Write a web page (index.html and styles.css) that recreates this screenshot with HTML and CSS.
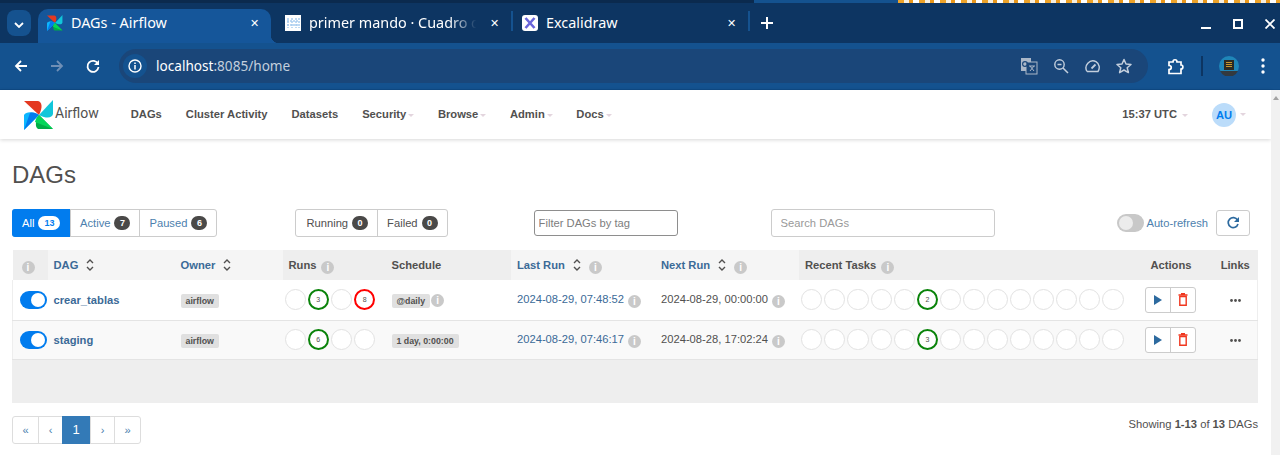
FILE: index.html
```html
<!DOCTYPE html>
<html lang="en">
<head>
    <meta charset="UTF-8">
    <meta name="viewport" content="width=device-width, initial-scale=1.0">
    <title>DAGs - Airflow</title>
    <link rel="stylesheet" href="styles.css">
</head>
<body>
    <svg class="sprite" width="0" height="0" aria-hidden="true">
        <symbol id="pinwheel" viewBox="0 0 30 30">
            <path fill="#e43921" d="M0 1 L14 1 C18 2 19 7 15 15 Z"/>
            <path fill="#11c6da" d="M29 0 L29 14 C28 18 23 19 15 15 Z"/>
            <path fill="#00ad46" d="M29 29 L14 29 C11 27 11 22 15 15 Z"/>
            <path fill="#0cb6ff" d="M0 30 L0 15 C2 12 8 11 15 15 Z"/>
            <path fill="#017cee" d="M0 30 L6 13 C9 12 12 13 15 15 Z"/>
            <path fill="#04d659" d="M29 29 L11 22 C12 18 13 17 15 15 Z"/>
        </symbol>
        <symbol id="sort" viewBox="0 0 8 12">
            <path fill="none" stroke="currentColor" stroke-width="1.4" d="M1 4 L4 1 L7 4 M1 8 L4 11 L7 8"/>
        </symbol>
        <symbol id="play" viewBox="0 0 8 10">
            <path fill="#2d6a9f" d="M0 0 L8 5 L0 10 Z"/>
        </symbol>
        <symbol id="trash" viewBox="0 0 10 13">
            <path fill="none" stroke="#f0371f" stroke-width="1.400" d="M1.800 3.500 H8.200 V12.300 H1.800 Z"/>
            <path stroke="#f0371f" stroke-width="1.300" d="M0.500 2 H9.500 M3 0.600 H7"/>
        </symbol>
        <symbol id="more" viewBox="0 0 11 3">
            <circle cx="1.500" cy="1.500" r="1.400" fill="#51504f"/>
            <circle cx="5.500" cy="1.500" r="1.400" fill="#51504f"/>
            <circle cx="9.500" cy="1.500" r="1.400" fill="#51504f"/>
        </symbol>
    </svg>

    <div class="top-strip">
        <div class="strip-dark"></div>
        <div class="strip-blue"></div>
        <div class="strip-wall"></div>
    </div>

    <div class="tabbar">
        <button class="tab-search">
            <svg width="10" height="6" viewBox="0 0 10 6"><path fill="none" stroke="#fff" stroke-width="1.8" d="M1 1 L5 5 L9 1"/></svg>
        </button>
        <div class="tab tab-active">
            <svg class="favicon" viewBox="0 0 30 30"><use href="#pinwheel"/></svg>
            <span class="tab-title">DAGs - Airflow</span>
            <span class="tab-close">✕</span>
        </div>
        <div class="tab">
            <svg class="favicon" viewBox="0 0 16 16">
                <rect width="16" height="16" fill="#fff"/>
                <path fill="none" stroke="#a9cdf0" stroke-width="1.5" stroke-dasharray="2 1" d="M3 3 V13 M7 3 V13 M11 3 V13 M14 3 V13 M2 6 H14 M2 10 H14"/>
            </svg>
            <span class="tab-title tab-fade">primer mando · Cuadro d</span>
            <span class="tab-close">✕</span>
        </div>
        <div class="tab-sep"></div>
        <div class="tab">
            <svg class="favicon" viewBox="0 0 16 16">
                <rect width="16" height="16" rx="3" fill="#fff"/>
                <path fill="none" stroke="#6965db" stroke-width="2.6" d="M3.5 3 L12.5 13 M12.5 3 L3.5 13"/>
            </svg>
            <span class="tab-title">Excalidraw</span>
            <span class="tab-close">✕</span>
        </div>
        <div class="tab-sep"></div>
        <svg class="new-tab" width="12" height="12" viewBox="0 0 12 12"><path stroke="#fff" stroke-width="2" d="M6 0 V12 M0 6 H12"/></svg>
        <div class="win-controls">
            <svg width="10" height="10" viewBox="0 0 10 10"><path stroke="#fff" stroke-width="2" d="M0 9 H10"/></svg>
            <svg width="10" height="10" viewBox="0 0 10 10"><rect x="1" y="1" width="8" height="8" fill="none" stroke="#fff" stroke-width="2"/></svg>
            <svg width="10" height="10" viewBox="0 0 10 10"><path stroke="#fff" stroke-width="1.8" d="M0.5 0.5 L9.5 9.5 M9.5 0.5 L0.5 9.5"/></svg>
        </div>
    </div>

    <div class="toolbar">
        <svg class="tool" viewBox="0 0 16 16"><path fill="none" stroke="#fff" stroke-width="1.8" d="M14 8 H3 M8 3 L3 8 L8 13"/></svg>
        <svg class="tool" viewBox="0 0 16 16"><path fill="none" stroke="#6f8fb6" stroke-width="1.8" d="M2 8 H13 M8 3 L13 8 L8 13"/></svg>
        <svg class="tool" viewBox="0 0 16 16"><path fill="none" stroke="#fff" stroke-width="1.8" d="M13 6 A5.5 5.5 0 1 0 13.5 9"/><path fill="#fff" d="M14 2 V7 H9 Z"/></svg>
        <div class="omnibox">
            <span class="site-info">
                <svg width="14" height="14" viewBox="0 0 14 14"><circle cx="7" cy="7" r="6" fill="none" stroke="#fff" stroke-width="1.4"/><path stroke="#fff" stroke-width="1.5" d="M7 6 V10.5 M7 3.4 V5"/></svg>
            </span>
            <span class="url"><b>localhost</b>:8085/home</span>
            <span class="omni-icons">
                <svg width="18" height="18" viewBox="0 0 18 18">
                    <rect x="1" y="1" width="10" height="13" fill="#aab7c8"/>
                    <rect x="6" y="5" width="11" height="12" fill="#1a4679" stroke="#aab7c8"/>
                    <circle cx="5" cy="7" r="2.4" fill="none" stroke="#1a4679" stroke-width="1.2"/>
                    <path fill="none" stroke="#aab7c8" d="M9 9 H15 M10 9 L14 14 M14 9 L10 14"/>
                </svg>
                <svg width="16" height="16" viewBox="0 0 16 16"><circle cx="6.5" cy="6.5" r="4.7" fill="none" stroke="#c3cfdd" stroke-width="1.4"/><path stroke="#c3cfdd" stroke-width="1.5" d="M10 10 L15 15 M4.5 6.5 H8.5"/></svg>
                <svg width="17" height="16" viewBox="0 0 17 16"><path fill="none" stroke="#c3cfdd" stroke-width="1.4" d="M3 13.5 H14 A7 7 0 0 0 12 3.6 A7 7 0 0 0 3 13.5"/><path stroke="#c3cfdd" stroke-width="1.8" d="M7.5 10.5 L11.5 6.5"/></svg>
                <svg width="16" height="16" viewBox="0 0 16 16"><path fill="none" stroke="#c3cfdd" stroke-width="1.5" stroke-linejoin="round" d="M8 1.5 L10 6 L15 6.5 L11.2 9.7 L12.4 14.6 L8 12 L3.6 14.6 L4.8 9.7 L1 6.5 L6 6 Z"/></svg>
            </span>
        </div>
        <svg class="ext-icon" width="17" height="17" viewBox="0 0 17 17"><path fill="none" stroke="#fff" stroke-width="1.7" d="M2 4 H6 C6 1 10 1 10 4 H14 V7 C16.500 7 16.500 11 14 11 V15.500 H2 V11.500 C5 11.500 5 7.500 2 7.500 Z"/></svg>
        <div class="tool-sep"></div>
        <svg class="avatar-pic" width="20" height="20" viewBox="0 0 20 20">
            <circle cx="10" cy="10" r="10" fill="#1f86b8"/>
            <path fill="#33393f" d="M1 15 H19 A10 10 0 0 1 1 15 Z"/>
            <rect x="5" y="4" width="10" height="10" fill="#2b2a22"/>
            <path stroke="#c8962c" d="M7 6.500 H13 M7 8.500 H13 M7 10.500 H13"/>
        </svg>
        <svg class="kebab" width="4" height="16" viewBox="0 0 4 16"><circle cx="2" cy="2" r="1.700" fill="#fff"/><circle cx="2" cy="8" r="1.700" fill="#fff"/><circle cx="2" cy="14" r="1.700" fill="#fff"/></svg>
    </div>

    <div class="viewport">
        <div class="page">
            <nav class="navbar">
                <a class="brand">
                    <svg width="30" height="30" viewBox="0 0 30 30"><use href="#pinwheel"/></svg>
                    <span>Airflow</span>
                </a>
                <a class="nav-link">DAGs</a>
                <a class="nav-link">Cluster Activity</a>
                <a class="nav-link">Datasets</a>
                <a class="nav-link caret">Security</a>
                <a class="nav-link caret">Browse</a>
                <a class="nav-link caret">Admin</a>
                <a class="nav-link caret">Docs</a>
                <a class="nav-link caret nav-time">15:37 UTC</a>
                <a class="nav-user caret"><span class="user-badge">AU</span></a>
            </nav>

            <main class="content">
                <h1>DAGs</h1>

                <div class="filters">
                    <div class="btn-group">
                        <a class="btn btn-on">All <span class="count count-on">13</span></a>
                        <a class="btn">Active <span class="count">7</span></a>
                        <a class="btn">Paused <span class="count">6</span></a>
                    </div>
                    <div class="btn-group group-state">
                        <a class="btn">Running <span class="count">0</span></a>
                        <a class="btn">Failed <span class="count">0</span></a>
                    </div>
                    <input class="tag-filter" type="text" placeholder="Filter DAGs by tag">
                    <input class="dag-search" type="text" placeholder="Search DAGs">
                    <div class="refresh">
                        <span class="switch switch-off"></span>
                        <span class="refresh-label">Auto-refresh</span>
                        <button class="refresh-btn">
                            <svg width="14" height="14" viewBox="0 0 14 14"><path fill="none" stroke="#2d6a9f" stroke-width="1.700" d="M11.500 4 A5 5 0 1 0 12 8"/><path fill="#2d6a9f" d="M13 1 V6 H8 Z"/></svg>
                        </button>
                    </div>
                </div>

                <table class="dag-table">
                    <thead>
                        <tr>
                            <th class="col-toggle th-dark"><span class="info info-first"></span></th>
                            <th class="col-dag"><a>DAG</a><svg class="sort"><use href="#sort"/></svg></th>
                            <th class="col-owner"><a>Owner</a><svg class="sort"><use href="#sort"/></svg></th>
                            <th class="col-runs th-dark">Runs<span class="info"></span></th>
                            <th class="col-schedule th-dark">Schedule</th>
                            <th class="col-last"><a>Last Run</a><svg class="sort"><use href="#sort"/></svg><span class="info"></span></th>
                            <th class="col-next"><a>Next Run</a><svg class="sort"><use href="#sort"/></svg><span class="info"></span></th>
                            <th class="col-tasks th-dark">Recent Tasks<span class="info"></span></th>
                            <th class="col-actions th-dark">Actions</th>
                            <th class="col-links th-dark">Links</th>
                        </tr>
                    </thead>
                    <tbody>
                        <tr>
                            <td class="cell-toggle"><span class="switch"></span></td>
                            <td><a class="dag-name">crear_tablas</a></td>
                            <td><span class="tag">airflow</span></td>
                            <td>
                                <div class="circles">
                                    <span class="dot"></span><span class="dot dot-ok">3</span><span class="dot"></span><span class="dot dot-fail">8</span>
                                </div>
                            </td>
                            <td><span class="tag">@daily</span><span class="info info-tag"></span></td>
                            <td><a class="date">2024-08-29, 07:48:52</a><span class="info"></span></td>
                            <td><span class="date date-next">2024-08-29, 00:00:00</span><span class="info"></span></td>
                            <td>
                                <div class="circles">
                                    <span class="dot"></span><span class="dot"></span><span class="dot"></span><span class="dot"></span><span class="dot"></span><span class="dot dot-ok">2</span><span class="dot"></span><span class="dot"></span><span class="dot"></span><span class="dot"></span><span class="dot"></span><span class="dot"></span><span class="dot"></span><span class="dot"></span>
                                </div>
                            </td>
                            <td class="cell-actions">
                                <div class="action-group">
                                    <button class="action"><svg width="8" height="10"><use href="#play"/></svg></button>
                                    <button class="action"><svg width="10" height="13"><use href="#trash"/></svg></button>
                                </div>
                            </td>
                            <td class="cell-links"><svg class="more" width="11" height="3"><use href="#more"/></svg></td>
                        </tr>
                        <tr>
                            <td class="cell-toggle"><span class="switch"></span></td>
                            <td><a class="dag-name">staging</a></td>
                            <td><span class="tag">airflow</span></td>
                            <td>
                                <div class="circles">
                                    <span class="dot"></span><span class="dot dot-ok">6</span><span class="dot"></span><span class="dot"></span>
                                </div>
                            </td>
                            <td><span class="tag">1 day, 0:00:00</span></td>
                            <td><a class="date">2024-08-29, 07:46:17</a><span class="info"></span></td>
                            <td><span class="date date-next">2024-08-28, 17:02:24</span><span class="info"></span></td>
                            <td>
                                <div class="circles">
                                    <span class="dot"></span><span class="dot"></span><span class="dot"></span><span class="dot"></span><span class="dot"></span><span class="dot dot-ok">3</span><span class="dot"></span><span class="dot"></span><span class="dot"></span><span class="dot"></span><span class="dot"></span><span class="dot"></span><span class="dot"></span><span class="dot"></span>
                                </div>
                            </td>
                            <td class="cell-actions">
                                <div class="action-group">
                                    <button class="action"><svg width="8" height="10"><use href="#play"/></svg></button>
                                    <button class="action"><svg width="10" height="13"><use href="#trash"/></svg></button>
                                </div>
                            </td>
                            <td class="cell-links"><svg class="more" width="11" height="3"><use href="#more"/></svg></td>
                        </tr>
                    </tbody>
                </table>
                <div class="table-foot"></div>

                <div class="pager-row">
                    <div class="pager">
                        <a>«</a><a>‹</a><a class="pager-on">1</a><a>›</a><a>»</a>
                    </div>
                    <p class="showing">Showing <b>1-13</b> of <b>13</b> DAGs</p>
                </div>
            </main>
        </div>
        <div class="scrollbar"><span class="scroll-up"></span></div>
    </div>
</body>
</html>
```

FILE: styles.css
```css
* {
    box-sizing: border-box;
}
html, body {
    height: 100%;
}
body {
    margin: 0;
    overflow: hidden;
    display: flex;
    flex-direction: column;
    background: #fff;
    color: #51504f;
    font-family: "Liberation Sans", Arial, sans-serif;
    font-size: 11.2px;
    line-height: 16px;
}
a {
    color: inherit;
    text-decoration: none;
}
button {
    padding: 0;
    font: inherit;
}
.sprite {
    display: block;
    height: 0;
}

/* browser chrome */
.top-strip {
    display: flex;
    height: 3px;
}
.strip-dark {
    width: 754px;
    background: #0b2a4e;
}
.strip-blue {
    width: 144px;
    background: #14528f;
}
.strip-wall {
    flex: 1;
    background: repeating-linear-gradient(90deg, #eda32a 0 6px, #f7efe0 6px 11px, #e9981c 11px 15px, #fff 15px 21px);
}
.tabbar {
    display: flex;
    align-items: flex-end;
    height: 40px;
    background: #0d3562;
    color: #fff;
    font-family: "Noto Sans", sans-serif;
    font-size: 14.4px;
}
.tab-search {
    align-self: flex-start;
    width: 24px;
    height: 26px;
    margin: 7px 7px 0 7px;
    background: #15528f;
    border: 0;
    border-radius: 8px;
}
.tab {
    display: flex;
    align-items: center;
    width: 235px;
    height: 34px;
    padding: 0 8px 6px 9px;
}
.tab-active {
    position: relative;
    width: 233px;
    margin-right: 5px;
    background: #15569a;
    border-radius: 10px 10px 0 0;
}
.tab-active::after {
    content: "";
    position: absolute;
    right: -8px;
    bottom: 0;
    width: 8px;
    height: 8px;
    background: radial-gradient(circle at 100% 0, transparent 8px, #15569a 8.5px);
}
.favicon {
    flex: none;
    width: 16px;
    height: 16px;
    margin-right: 8px;
}
.tab-title {
    flex: 1;
    white-space: nowrap;
}
.tab-fade {
    flex: none;
    margin-right: auto;
    -webkit-mask-image: linear-gradient(90deg, #000 82%, transparent 98%);
    mask-image: linear-gradient(90deg, #000 82%, transparent 98%);
}
.tab-close {
    flex: none;
    margin-right: 4px;
    font-size: 11px;
}
.tab-sep {
    width: 2px;
    height: 20px;
    margin-bottom: 12px;
    background: #15528f;
}
.new-tab {
    margin: 0 0 14px 11px;
}
.win-controls {
    display: flex;
    gap: 22px;
    margin: 0 5px 14px auto;
}
.toolbar {
    display: flex;
    align-items: center;
    height: 47px;
    padding-left: 13px;
    background: #14528f;
    border-bottom: 1px solid #0f4a85;
}
.tool {
    width: 16px;
    height: 16px;
    margin-right: 20px;
}
.tool:nth-of-type(3) {
    margin-right: 18px;
}
.omnibox {
    display: flex;
    align-items: center;
    width: 1029px;
    height: 34px;
    padding: 0 16px 0 4px;
    background: #1a4679;
    border-radius: 17px;
    color: #c3cfdd;
    font-family: "Noto Sans", sans-serif;
    font-size: 13.6px;
}
.site-info {
    display: flex;
    align-items: center;
    justify-content: center;
    width: 24px;
    height: 24px;
    margin-right: 9px;
    background: #14528f;
    border-radius: 50%;
}
.url b {
    font-weight: 400;
    color: #fff;
}
.omni-icons {
    display: flex;
    align-items: center;
    gap: 15px;
    margin-left: auto;
}
.ext-icon {
    margin-left: 19px;
}
.tool-sep {
    width: 2px;
    height: 20px;
    margin-left: 17px;
    background: #0d3562;
}
.avatar-pic {
    margin-left: 16px;
}
.kebab {
    margin-left: 22px;
}

/* airflow page */
.viewport {
    flex: 1;
    display: flex;
    min-height: 0;
}
.page {
    flex: 1;
    min-width: 0;
}
.scrollbar {
    width: 9px;
    background: #f1f1f1;
    padding: 6px 2px 0;
}
.scroll-up {
    display: block;
    border: 3px solid transparent;
    border-top: 0;
    border-bottom: 4px solid #a3a3a3;
    height: 4px;
    width: 6px;
}
.navbar {
    display: flex;
    align-items: center;
    height: 49px;
    padding: 0 25px 0 24px;
    background: #fff;
    box-shadow: 0 1px 4px rgba(0, 0, 0, 0.16);
    font-weight: 700;
}
.brand {
    display: flex;
    align-items: center;
    margin-right: 32px;
    font-size: 14px;
    font-weight: 400;
    font-family: "Roboto", sans-serif;
}
.brand svg {
    margin-right: 1px;
}
.brand span {
    margin-bottom: 3px;
}
.nav-link {
    margin-right: 24px;
    margin-bottom: 2px;
}
.caret::after {
    content: "";
    display: inline-block;
    width: 0;
    margin-left: 2px;
    vertical-align: 1px;
    border: 3px solid transparent;
    border-top-color: #e3d5de;
    border-bottom: 0;
}
.nav-link.caret {
    margin-right: 23.6px;
}
.nav-link.nav-time {
    margin-left: auto;
    margin-right: 24px;
}
.nav-time::after {
    margin-left: 5px;
}
.nav-user {
    display: flex;
    align-items: center;
}
.nav-user::after {
    margin-left: 4px;
}
.user-badge {
    display: flex;
    align-items: center;
    justify-content: center;
    width: 24px;
    height: 24px;
    background: #bbdcfa;
    border-radius: 50%;
    color: #017cee;
}
.content {
    padding: 0 13px 0 12px;
}
h1 {
    margin: 23px 0 21px;
    font-size: 24px;
    font-weight: 400;
    line-height: 26px;
}
.filters {
    display: flex;
    align-items: center;
    height: 28px;
    margin-bottom: 13px;
    color: #51504f;
}
.btn-group {
    display: flex;
    height: 28px;
    border: 1px solid #ccc;
    border-radius: 3px;
}
.group-state {
    margin-left: 78px;
}
.btn {
    display: flex;
    align-items: center;
    gap: 4px;
    padding: 0 9px;
    border-left: 1px solid #ccc;
    color: #4d7fae;
}
.btn:first-child {
    border-left: 0;
}
.group-state .btn {
    color: #51504f;
}
.group-state .btn:first-child {
    padding-left: 10px;
}
.btn-on {
    margin: -1px 0 -1px -1px;
    padding: 0 0 0 10px;
    width: 58px;
    background: #017cee;
    border-radius: 3px 0 0 3px;
    color: #fff;
}
.count {
    display: inline-block;
    min-width: 16px;
    padding: 0 4px;
    background: #4a4948;
    border-radius: 8px;
    color: #fff;
    font-size: 9px;
    font-weight: 700;
    line-height: 14px;
    text-align: center;
}
.count-on {
    background: #fff;
    color: #017cee;
    min-width: 22px;
}
input {
    height: 26px;
    padding: 0 4px;
    background: #fff;
    font: inherit;
    border-radius: 3px;
}
.tag-filter {
    width: 144px;
    margin-left: 86px;
    border: 1px solid #8e8e8e;
}
.tag-filter::placeholder {
    color: #7d7d7d;
}
.dag-search {
    width: 224px;
    height: 28px;
    margin-left: 93px;
    padding: 0 9px;
    border: 1px solid #ccc;
}
.dag-search::placeholder {
    color: #999;
}
.refresh {
    display: flex;
    align-items: center;
    margin-left: auto;
}
.switch {
    position: relative;
    display: inline-block;
    width: 27px;
    height: 18px;
    background: #017cee;
    border-radius: 9px;
}
.switch::after {
    content: "";
    position: absolute;
    top: 2px;
    right: 2px;
    width: 14px;
    height: 14px;
    background: #fff;
    border-radius: 50%;
}
.switch-off {
    background: #c8c8c8;
}
.switch-off::after {
    right: auto;
    left: 2px;
    background: #ececec;
}
.refresh-label {
    margin: 0 8px 0 2px;
    color: #4d7fae;
}
.refresh-btn {
    display: flex;
    align-items: center;
    justify-content: center;
    width: 34px;
    height: 26px;
    background: #fff;
    border: 1px solid #ccc;
    border-radius: 3px;
    margin-right: 8px;
}

/* table */
.dag-table {
    width: 100%;
    table-layout: fixed;
    border-collapse: collapse;
}
.dag-table th {
    height: 30px;
    padding: 0 0 0 6px;
    background: #f5f5f5;
    font-weight: 700;
    text-align: left;
    white-space: nowrap;
}
.dag-table th.th-dark {
    background: #eee;
}
.dag-table th a {
    color: #3b6a97;
}
.dag-table td {
    height: 39.500px;
    padding: 0 0 0 6px;
    border-bottom: 1px solid #e4e4e4;
    white-space: nowrap;
}
.dag-table tbody tr:nth-child(even) {
    background: #f9f9f9;
}
.dag-table tbody tr:first-child td {
    height: 40px;
}
.col-toggle { width: 35px; }
.col-dag { width: 127px; }
.col-owner { width: 108px; }
.col-runs { width: 103px; }
.col-schedule { width: 125.5px; }
.col-last { width: 144px; }
.col-next { width: 144px; }
.col-tasks { width: 342px; }
.col-actions { width: 72px; }
.dag-table th.col-toggle {
    padding-left: 9px;
}
.dag-table th.col-actions {
    padding: 0 12px 0 0;
    text-align: center;
}
.dag-table th.col-links {
    padding: 0;
    text-align: center;
}
.dag-table td.cell-toggle {
    padding-left: 7px;
    border-left: 1px solid #eee;
}
.cell-toggle .switch {
    display: block;
}
.dag-name {
    color: #3b6a97;
    font-weight: 700;
}
.sort {
    width: 8px;
    height: 12px;
    margin: 0 8px;
    vertical-align: -2px;
}
.info {
    display: inline-block;
    width: 13px;
    height: 13px;
    margin-left: 5px;
    background: #c9c9c9;
    border-radius: 50%;
    color: #fff;
    font-size: 10px;
    font-weight: 700;
    line-height: 13px;
    text-align: center;
    vertical-align: -2px;
}
.info::before {
    content: "i";
}
.info-first,
.sort + .info {
    margin-left: 0;
}
.info-tag {
    margin-left: 1px;
    vertical-align: 0;
}
.tag {
    display: inline-block;
    padding: 0 5px;
    background: #e0e0e0;
    border-radius: 2px;
    color: #51504f;
    font-size: 8.800px;
    font-weight: 700;
    line-height: 14px;
    vertical-align: middle;
}
.circles {
    display: flex;
    gap: 2px;
    margin-left: -4px;
}
.dot {
    flex: none;
    display: flex;
    align-items: center;
    justify-content: center;
    width: 21.2px;
    height: 21.2px;
    background: #fff;
    border: 1px solid #e2e2e2;
    border-radius: 50%;
    color: #51504f;
    font-size: 7px;
}
.dot-ok {
    border: 2px solid #0a830a;
}
.dot-fail {
    border: 2px solid #f00;
}
.date {
    color: #3b6a97;
}
.date + .info {
    margin-left: 4px;
}
.date-next {
    color: #51504f;
}
.dag-table td.cell-actions {
    padding: 0 0 0 4px;
}
.action-group {
    display: flex;
    width: 51px;
    height: 26px;
    border: 1px solid #ccc;
    border-radius: 3px;
    background: #fff;
}
.action {
    flex: 1;
    display: flex;
    align-items: center;
    justify-content: center;
    background: transparent;
    border: 0;
}
.action + .action {
    border-left: 1px solid #ccc;
}
.dag-table td.cell-links {
    padding: 0;
    border-right: 1px solid #eee;
    text-align: center;
}
.more {
    vertical-align: middle;
}
.table-foot {
    height: 43px;
    background: #eee;
}
.pager-row {
    display: flex;
    align-items: flex-start;
    justify-content: space-between;
    margin-top: 13px;
}
.pager {
    display: flex;
    height: 28px;
    border: 1px solid #ddd;
    border-radius: 3px;
}
.pager a {
    display: flex;
    align-items: center;
    justify-content: center;
    width: 24px;
    border-left: 1px solid #ddd;
    color: #4d7fae;
}
.pager a:first-child {
    width: 25px;
    border-left: 0;
}
.pager a:last-child {
    width: 26px;
}
.pager .pager-on {
    width: 28px;
    margin: -1px 0;
    background: #337ab7;
    border: 0;
    color: #fff;
    font-size: 13px;
}
.showing {
    margin: 0;
}
```
